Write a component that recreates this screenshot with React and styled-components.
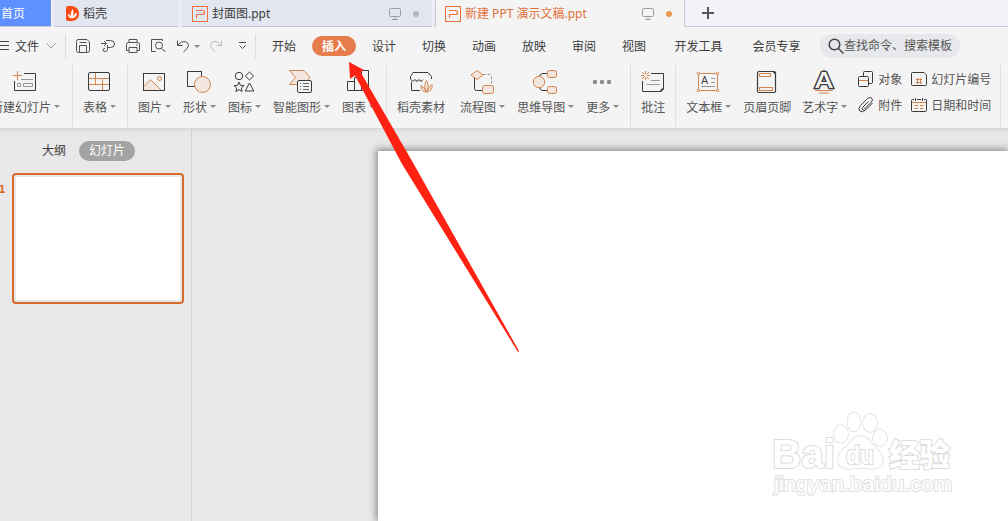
import React from 'react'
import styled, { createGlobalStyle, css } from 'styled-components';

const dark = '#3a3a3a';
const orange = '#d2854f';
const pale = '#f2e6df';
const gray = '#999';

const ribbonIcons = {
  newSlide: <>
    <path d='M13 4.5H24.5V21.5H3.5V12' stroke={dark} />
    <path d='M6.5 2V11M2 6.5H11' stroke={orange} />
    <path d='M10 10.5H22M6.5 14.5H9.5V17.5H6.5ZM12.5 14.5H21.5V17.5H12.5Z' stroke={gray} />
  </>,
  table: <>
    <path d='M4 9.5H24M4 15.5H24M10.5 4V15M17.5 10V21' stroke={orange} />
    <rect x='3.5' y='3.5' width='21' height='18' rx='1.5' stroke={dark} />
  </>,
  picture: <>
    <path d='M4 18L10.5 10.5L21 21H4Z' fill={pale} />
    <path d='M4 17.5L10.5 10.5L21 21' stroke={orange} />
    <circle cx='19.5' cy='9.5' r='2' stroke={orange} fill={pale} />
    <rect x='3.5' y='4.5' width='21' height='17' stroke={dark} />
  </>,
  shape: <>
    <rect x='2.5' y='2.5' width='14' height='15' stroke={dark} />
    <circle cx='17.5' cy='15.5' r='8' stroke={orange} fill={pale} />
  </>,
  icons: <>
    <circle cx='9' cy='7' r='3.7' stroke={dark} />
    <path d='M19.5 3L23.7 7L19.5 11L15.3 7Z' stroke={dark} />
    <path d='M9 13L10.4 16.3L14 16.6L11.3 19L12.1 22.5L9 20.6L5.9 22.5L6.7 19L4 16.6L7.6 16.3Z' stroke={dark} />
    <path d='M19.5 14L23.8 22H15.2Z' stroke={dark} />
  </>,
  smart: <>
    <path d='M2.5 1.5H17L23 8.5L17 15.5H2.5L8.5 8.5Z' stroke={orange} fill={pale} />
    <rect x='10.5' y='11.5' width='14' height='12' rx='1.5' stroke={dark} fill='#f4f4f4' />
    <path d='M13 14.5H14M16 14.5H22M13 17.5H14M16 17.5H22M13 20.5H14M16 20.5H22' stroke='#666' />
  </>,
  chart: <path d='M3.5 12.5H10.5V21.5H3.5ZM10.5 8.5H17.5V21.5H10.5ZM17.5 1.5H24.5V21.5H17.5Z' stroke={dark} />,
  store: <>
    <path d='M3.5 10V7.5L6 3.5H21L24.5 7.5V10M3.5 10Q5.5 14 8 10.5Q10 14 12 10.5Q14 14 16 10.5M4.5 13V21.5H13' stroke={dark} />
    <path d='M19.500 23Q16 18 19.500 11.500Q23 18 19.500 23Q22 17.500 25 15.500Q26 22 19.500 23Q14 23 14 16.500Q17 18 19.500 23' stroke={orange} fill={pale} />
  </>,
  flow: <>
    <path d='M6.5 9V19.5Q6.5 21.5 8.5 21.5H14' stroke={dark} />
    <path d='M15 5.5H21.5Q23.5 5.5 23.5 7.5V16' stroke={gray} strokeDasharray='3 1.5' />
    <path d='M9 1.5L15 6L9 10.5L3 6Z' stroke={orange} fill={pale} />
    <rect x='14.5' y='16.5' width='11' height='8' rx='2' stroke={orange} fill={pale} />
  </>,
  mind: <>
    <path d='M8.5 8Q8.5 4.5 12 4.5H17M8.5 18Q8.5 21.5 12 21.5H17' stroke={dark} />
    <circle cx='8' cy='13' r='5.7' stroke={orange} fill={pale} />
    <rect x='16.5' y='1.5' width='9' height='7' rx='2' stroke={orange} fill={pale} />
    <rect x='16.5' y='17.5' width='9' height='7' rx='2' stroke={orange} fill={pale} />
  </>,
  more: <g fill='#8c8c8c'>
    <circle cx='7' cy='13' r='2.2' />
    <circle cx='14' cy='13' r='2.2' />
    <circle cx='21' cy='13' r='2.2' />
  </g>,
  comment: <>
    <path d='M12 4.5H24.5V20L21.5 22.5H4Q3.5 22.5 3.5 22V12' stroke={dark} />
    <path d='M25 18.5V20L22 23H20.5Q21.5 19.5 25 18.5Z' fill={dark} />
    <path d='M12 11.5H21M7.5 15.5H20.5' stroke={gray} />
    <path d='M6.5 2V5M6.5 8V11M2 6.5H5M8 6.5H11M3 3L5.3 5.3M7.7 7.7L10 10M10 3L7.7 5.3M5.3 7.7L3 10' stroke={orange} />
  </>,
  textBox: <>
    <rect x='4.5' y='4.5' width='19' height='17' stroke={orange} />
    <text x='7' y='15' fontSize='11' fontFamily='Roboto' fill={dark}>A</text>
    <path d='M17 9.5H21M17 13.5H21M7.5 17.5H21' stroke={gray} />
    <g stroke={orange} fill='#f4f4f4'>
      <circle cx='4.5' cy='4.5' r='1.3' />
      <circle cx='23.5' cy='4.5' r='1.3' />
      <circle cx='4.5' cy='21.5' r='1.3' />
      <circle cx='23.5' cy='21.5' r='1.3' />
    </g>
  </>,
  header: <>
    <rect x='4.5' y='2.5' width='18' height='21' rx='1.5' stroke={dark} strokeWidth='1.2' />
    <path d='M19 2H21L23 4V6.5Z' fill={dark} />
    <rect x='6.5' y='4.5' width='11' height='3' stroke={orange} />
    <rect x='6.5' y='18.5' width='13' height='3' stroke={orange} />
  </>,
  wordArt: <>
    <text x='4.500' y='19' fontSize='22' fontWeight='500' fontFamily='Inter' textLength='19' lengthAdjust='spacingAndGlyphs' stroke={dark} strokeWidth='2.500' paintOrder='stroke' fill='#f4f4f4'>A</text>
    <path d='M5 21.500H23M9 24H19' stroke={orange} />
  </>,
};

const smallIcons = {
  object: <>
    <rect x='5.5' y='.5' width='9' height='12' rx='1' stroke={dark} />
    <rect x='.5' y='5.5' width='10' height='10' rx='1' stroke={dark} fill='#f4f4f4' />
    <path d='M1 9.5H10' stroke={orange} />
  </>,
  attach: <path d='M10.5 4.5L4.5 10.5Q3.5 12 4.5 12.5Q5.5 13 6.5 12L13.5 5Q15.5 2.5 13.5 1Q11.5 0 9.5 1.5L2.5 8.5Q-.5 12 1.8 14Q4.5 16 7.5 13L14.5 6' stroke={dark} />,
  number: <>
    <path d='M13 1.5H1.5Q.5 1.5 .5 2.5V13.5Q.5 14.5 1.5 14.5H14.5Q15.5 14.5 15.5 13.5V4Z' stroke={dark} />
    <path d='M6.5 7V13M9.5 7V13M5 8.5H11M5 11.5H11' stroke={orange} />
  </>,
  date: <>
    <path d='M3 2.5H1.5Q.5 2.5 .5 3.5V13.5Q.5 14.5 1.5 14.5H14.5Q15.5 14.5 15.5 13.5V3.5Q15.5 2.5 14.5 2.5H13M6 2.5H10M4.5 1V4M11.5 1V4' stroke={dark} />
    <path d='M1 5.5H15M3.5 8.5H7M9 8.5H12.5M3.5 11.5H7M9 11.5H12.5' stroke={orange} />
  </>,
};

const quickIcons = {
  save: <path d='M2.5 1.5H12L14.5 4V12.5Q14.5 14.5 12.5 14.5H3.5Q1.5 14.5 1.5 12.5V3.5Q1.5 1.5 3.5 1.5M4.5 4.5H11.5M4.5 14V7.5H11.5V14' />,
  output: <path d='M1 5.5H6M4 3L6.5 5.5L4 8M6 2.5H10.5Q14.5 2.5 14.5 6Q14.5 9.5 10.5 9.5H7.5M7.5 7V11.5Q7.5 13.5 5.5 13.5H5Q3 13.5 3 12Q3 10.5 5 10.5' />,
  print: <path d='M4 4.5V1.5H12V4.5M4 12.5H1.5V6.5Q1.5 4.5 3.5 4.5H12.5Q14.5 4.5 14.5 6.5V12.5H12M4 9.5H12V14.5H4ZM11 7H12.5' />,
  preview: <path d='M6 13.5H1.5V1.5H12.5V3M14 13L11.3 10.3M12.5 7.5A3.5 3.5 0 1 1 5.5 7.5A3.5 3.5 0 1 1 12.5 7.5M13 11.5L15.5 14' />,
  undo: <path d='M2.5 2.5V7.5H7.5M3 7Q6 3 10 3.5Q13.5 4.5 13.5 7.5Q13.5 10 8.5 14' />,
  redo: <path d='M13.5 2.5V7.5H8.5M13 7Q10 3 6 3.5Q2.5 4.5 2.5 7.5Q2.5 10 7.5 14' stroke='#bbb' />,
};

const groups = [
  [{ icon: 'newSlide', label: '新建幻灯片', arrow: true }],
  [{ icon: 'table', label: '表格', arrow: true }],
  [
    { icon: 'picture', label: '图片', arrow: true },
    { icon: 'shape', label: '形状', arrow: true },
    { icon: 'icons', label: '图标', arrow: true },
    { icon: 'smart', label: '智能图形', arrow: true },
    { icon: 'chart', label: '图表', arrow: true },
  ],
  [
    { icon: 'store', label: '稻壳素材', extra: 3 },
    { icon: 'flow', label: '流程图', arrow: true },
    { icon: 'mind', label: '思维导图', arrow: true },
    { icon: 'more', label: '更多', arrow: true },
  ],
  [{ icon: 'comment', label: '批注', extra: -1 }],
];

const menus = ['开始', '插入', '设计', '切换', '动画', '放映', '审阅', '视图'];

const PptLogo = () => (
  <svg width='16' height='16' viewBox='0 0 16 16' fill='none' stroke='#f0703a'>
    <rect x='.5' y='.5' width='15' height='15' />
    <path d='M4 4.5H10.5Q12.5 4.5 12.5 6.5Q12.5 8.5 10.5 8.5H4.5V12' strokeWidth='1.2' />
  </svg>
)

const Monitor = () => (
  <svg width='12' height='12' viewBox='0 0 12 12' fill='none' stroke='#9a9ea8'>
    <path d='M1.5 .5H10.5Q11.5 .5 11.5 1.5V7.5Q11.5 8.5 10.5 8.5H1.5Q.5 8.5 .5 7.5V1.5Q.5 .5 1.5 .5M6 8.5V11M3 11.5H9' />
  </svg>
)

const RibbonItem = ({ icon, label, arrow, extra }) => (
  <Item $extra={extra} $arrow={arrow}>
    <svg width='28' height='26' viewBox='0 0 28 26' fill='none'>{ribbonIcons[icon]}</svg>
    <Label>{label}{arrow && <Caret />}</Label>
  </Item>
)

const SmallItem = ({ icon, label }) => (
  <Small>
    <svg width='16' height='16' viewBox='0 0 16 16' fill='none'>{smallIcons[icon]}</svg>
    <span>{label}</span>
  </Small>
)

const QuickIcon = ({ name }) => (
  <svg width='16' height='16' viewBox='0 0 16 16' fill='none' stroke='#505050'>{quickIcons[name]}</svg>
)

function App() {
  return (
    <Window>
      <GlobalStyle />
      <TabBar>
        <HomeTab>首页</HomeTab>
        <Tab $width={125}>
          <svg width='13' height='15' viewBox='0 0 13 15'>
            <path d='M0 2Q0 0 2 0H6Q13 1 13 8Q12.5 15 5.5 15H2Q0 15 0 13Z' fill='#fb4a10' />
            <path d='M6 12Q3.5 8 6.5 3Q8.5 6 6.5 11Q8 7.5 11 6.5Q11 11.5 6 12.5Q2 12 2 7.5Q4.5 8.5 6 12' fill='#fff' />
          </svg>
          <TabTitle>稻壳</TabTitle>
        </Tab>
        <Tab $width={250}>
          <PptLogo />
          <TabTitle>封面图.ppt</TabTitle>
          <Monitor />
          <Dot />
        </Tab>
        <Tab $active $width={250}>
          <PptLogo />
          <TabTitle>新建 PPT 演示文稿.ppt</TabTitle>
          <Monitor />
          <Dot $color='#e8974f' />
        </Tab>
        <AddTab>
          <svg width='12' height='12' viewBox='0 0 12 12' stroke='#555' strokeWidth='2'><path d='M6 0V12M0 6H12' /></svg>
        </AddTab>
      </TabBar>

      <MenuBar>
        <FileMenu>
          <svg width='9' height='10' viewBox='0 0 9 10' stroke='#444'><path d='M0 .5H9M0 4.5H9M0 8.5H9' /></svg>
          <span>文件</span>
          <svg width='10' height='6' viewBox='0 0 10 6' fill='none' stroke='#999'><path d='M.5 .5L5 5L9.5 .5' /></svg>
        </FileMenu>
        <QuickBar>
          <QuickIcon name='save' />
          <QuickIcon name='output' />
          <QuickIcon name='print' />
          <QuickIcon name='preview' />
          <UndoGroup>
            <QuickIcon name='undo' />
            <Caret $tight />
            <QuickIcon name='redo' />
          </UndoGroup>
          <svg width='9' height='8' viewBox='0 0 9 8' fill='none' stroke='#505050'><path d='M1 .5H8M1.5 3.5L4.5 6.5L7.5 3.5' /></svg>
        </QuickBar>
        <Menus>
          {menus.map(menu => <Menu key={menu} $active={menu === '插入'}>{menu}</Menu>)}
          <Menu $long>开发工具</Menu>
          <Menu $long>会员专享</Menu>
        </Menus>
        <Search>
          <svg width='16' height='16' viewBox='0 0 16 16' fill='none' stroke='#444' strokeWidth='1.5'>
            <circle cx='6.5' cy='6.5' r='5.3' /><path d='M10.5 10.5L15.5 15.5' />
          </svg>
          查找命令、搜索模板
        </Search>
      </MenuBar>

      <Ribbon>
        {groups.map((items, i) => (
          <Group key={i} $first={i === 0}>
            {items.map(item => <RibbonItem key={item.icon} {...item} />)}
          </Group>
        ))}
        <Group>
          <RibbonItem icon='textBox' label='文本框' arrow />
          <RibbonItem icon='header' label='页眉页脚' extra={-1} />
          <RibbonItem icon='wordArt' label='艺术字' arrow />
          <SmallGrid>
            <SmallItem icon='object' label='对象' />
            <SmallItem icon='number' label='幻灯片编号' />
            <SmallItem icon='attach' label='附件' />
            <SmallItem icon='date' label='日期和时间' />
          </SmallGrid>
        </Group>
      </Ribbon>

      <Body>
        <Sidebar>
          <SideTabs>
            大纲
            <SidePill>幻灯片</SidePill>
          </SideTabs>
          <ThumbRow>
            <ThumbNumber>1</ThumbNumber>
            <Thumb><Paper /></Thumb>
          </ThumbRow>
        </Sidebar>
        <Stage><Slide /></Stage>
      </Body>

      <Watermark viewBox='0 0 190 95'>
        <g fill='#fff' stroke='#dcdcdc' strokeWidth='2' paintOrder='stroke'>
          <text x='5' y='60' fontSize='40' fontWeight='700' textLength='63' lengthAdjust='spacingAndGlyphs'>Bai</text>
          <g strokeWidth='1.5'>
            <ellipse cx='74' cy='26' rx='7' ry='9' />
            <ellipse cx='87' cy='14' rx='6.5' ry='9.5' />
            <ellipse cx='103' cy='15' rx='7' ry='9' />
            <ellipse cx='113' cy='30' rx='7' ry='8' />
            <path d='M93 28Q100 28 105 36Q116 45 116 53Q115 61 105 61Q93 59 82 61Q71 61 71 51Q72 44 81 37Q87 28 93 28Z' />
          </g>
          <text x='79' y='56' fontSize='25' fontWeight='700' textLength='28' lengthAdjust='spacingAndGlyphs'>du</text>
          <text x='122' y='58' fontSize='31' fontWeight='900' textLength='61' lengthAdjust='spacingAndGlyphs'>经验</text>
          <text x='7' y='83' fontSize='21' stroke='#e2e2e2' textLength='178' lengthAdjust='spacingAndGlyphs'>jingyan.baidu.com</text>
        </g>
      </Watermark>

      <Pointer viewBox='0 0 175 295'>
        <path d='M2 2L17 10L13.5 12L65 101L172 291L171 292L55 104L8 15.500L3 19Z' fill='#ff2212' />
      </Pointer>
    </Window>
  )
}

const GlobalStyle = createGlobalStyle`
  * { box-sizing: border-box; }
  body {
    margin: 0;
    overflow: hidden;
    font: 12px/16px "Noto Sans", "Noto Sans CJK SC", sans-serif;
    color: #3c3c3c;
  }
  svg { display: block; flex: none; }
`;

const Window = styled.div`
  position: relative;
  display: flex;
  flex-direction: column;
  width: 1008px;
  height: 521px;
  overflow: hidden;
  background: #f4f4f4;
`;

const TabBar = styled.div`
  display: flex;
  height: 27px;
  background: #f3f4f9;
`;

const HomeTab = styled.div`
  width: 51px;
  height: 26px;
  padding: 6px 0 0 1px;
  color: #fff;
  background: #5e90ff;
  box-shadow: 0 1px #c2c7d9;
`;

const Tab = styled.div`
  display: flex;
  align-items: center;
  width: ${p => p.$width}px;
  height: 27px;
  margin-left: 3px;
  padding: 1px 13px 0 ${p => p.$width === 250 ? 10 : 12}px;
  background: #e2e6f0;
  border-bottom: 1px solid #c2c7d9;
  box-shadow: -3px 1px 0 -1px #e8ebf3;
  ${p => p.$active && css`
    color: #e2703a;
    background: #f4f4f4;
    border: solid #c2c7d9;
    border-width: 0 1px;
    padding-left: 9px;
    padding-right: 12px;
  `}
`;

const TabTitle = styled.span`
  flex: 1;
  margin-left: 4px;
  white-space: nowrap;
`;

const Dot = styled.i`
  width: 6px;
  height: 6px;
  margin-left: 12px;
  border-radius: 50%;
  background: ${p => p.$color || '#b4b8c4'};
`;

const AddTab = styled.div`
  flex: 1;
  padding: 7px 0 0 17px;
  border-bottom: 1px solid #c2c7d9;
`;

const MenuBar = styled.div`
  display: flex;
  align-items: center;
  height: 38px;
`;

const FileMenu = styled.div`
  display: flex;
  align-items: center;
  width: 66px;
  height: 24px;
  gap: 7px;
  border-right: 1px solid #dcdcdc;
  svg:first-child { margin-right: -1px; }
  span { padding-top: 2px; }
`;

const QuickBar = styled.div`
  display: flex;
  align-items: center;
  gap: 9px;
  width: 190px;
  height: 24px;
  padding-left: 9px;
  border-right: 1px solid #dcdcdc;
`;

const UndoGroup = styled.div`
  display: flex;
  align-items: center;
  width: 50px;
  margin-right: 4px;
  gap: 3px;
`;

const Caret = styled.i`
  display: inline-block;
  margin: ${p => p.$tight ? '0 5px 0 0' : '0 0 3px 3px'};
  border: solid transparent;
  border-width: 3px 3px 0;
  border-top-color: #8a8a8a;
`;

const Menus = styled.div`
  display: flex;
  align-items: center;
  padding-left: 3px;
`;

const Menu = styled.div`
  width: 50px;
  height: 20px;
  line-height: 21px;
  text-align: center;
  ${p => p.$long && css`
    width: 77px;
    margin-left: 1px;
  `}
  ${p => p.$active && css`
    width: 44px;
    margin: 0 3px;
    color: #fff;
    font-weight: 700;
    background: #e67b4c;
    border-radius: 10px;
  `}
`;

const Search = styled.div`
  display: flex;
  align-items: center;
  width: 140px;
  height: 24px;
  margin-left: 5px;
  padding-left: 8px;
  color: #555;
  white-space: nowrap;
  background: #e6e8eb;
  border-radius: 12px;
`;

const Ribbon = styled.div`
  display: flex;
  height: 64px;
  border-bottom: 1px solid #d6d6d6;
`;

const Group = styled.div`
  display: flex;
  flex: none;
  gap: 12px;
  height: 62px;
  padding: 4px 11px 0 10px;
  border-right: 1px solid #dfdfdf;
  ${p => p.$first && css`
    width: 73px;
    padding-left: 0;
    > div { margin-left: -9px; }
  `}
`;

const Item = styled.div`
  display: flex;
  flex-direction: column;
  align-items: center;
  flex: none;
  margin-right: ${p => p.$extra || 0}px;
  > svg { margin: ${p => p.$arrow ? '0 -1.5px 0 -2.5px' : '0 -2px'}; }
`;

const Label = styled.div`
  display: flex;
  align-items: center;
  margin-top: 5px;
  color: #555;
  white-space: nowrap;
`;

const SmallGrid = styled.div`
  display: grid;
  grid-template-columns: 41px 81px;
  grid-auto-rows: 26px;
  column-gap: 12px;
  margin: -3px -3px 0 -1px;
`;

const Small = styled.div`
  display: flex;
  align-items: center;
  gap: 4px;
  color: #555;
  white-space: nowrap;
  span { padding-top: 2px; }
`;

const Body = styled.div`
  display: flex;
  flex: 1;
  background: linear-gradient(#dedede, #e8e8e8 5px);
`;

const Sidebar = styled.div`
  width: 192px;
  border-right: 1px solid #d2d2d2;
`;

const SideTabs = styled.div`
  display: flex;
  align-items: center;
  gap: 13px;
  padding: 12px 0 0 42px;
`;

const SidePill = styled.div`
  width: 56px;
  line-height: 20px;
  text-align: center;
  color: #fff;
  background: #a3a3a3;
  border-radius: 10px;
`;

const ThumbRow = styled.div`
  display: flex;
  margin-top: 12px;
`;

const ThumbNumber = styled.div`
  width: 12px;
  padding-top: 9px;
  margin-left: -1px;
  margin-right: 1px;
  font: bold 10px/16px "DejaVu Sans Condensed", "DejaVu Sans", sans-serif;
  color: #d5651f;
`;

const Thumb = styled.div`
  width: 172px;
  height: 131px;
  padding: 2px;
  border: 2px solid #d56b2d;
  border-radius: 4px;
`;

const Paper = styled.div`
  height: 100%;
  background: #fff;
`;

const Stage = styled.div`
  display: flex;
  flex: 1;
  padding: 22px 0 0 186px;
  overflow: hidden;
`;

const Slide = styled.div`
  flex: 1;
  background: #fff;
  box-shadow: -1px -1px 7px 1px #8c8c8c;
`;

const Watermark = styled.svg`
  position: absolute;
  left: 767px;
  top: 408px;
  width: 190px;
  height: 95px;
  font-family: "Liberation Sans", "Noto Sans CJK SC", sans-serif;
`;

const Pointer = styled.svg`
  position: absolute;
  left: 347px;
  top: 60px;
  width: 175px;
  height: 295px;
`;

export default App
